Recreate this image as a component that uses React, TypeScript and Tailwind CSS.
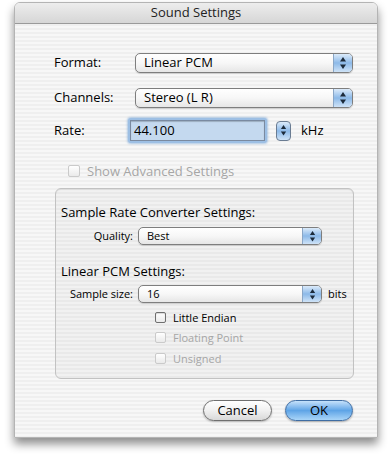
import React from "react";

const stripes =
  "bg-[image:repeating-linear-gradient(180deg,#efefef_0px,#efefef_2px,#f7f7f7_2px,#f7f7f7_4px)]";

function Arrows({ size = 4 }: { size?: number }) {
  return (
    <svg width={size * 2} height={size * 3 + 2} viewBox="0 0 8 14">
      <path d="M4 1 L7 5.5 L1 5.5 Z" fill="#1c2a3a" />
      <path d="M4 13 L7 8.5 L1 8.5 Z" fill="#1c2a3a" />
    </svg>
  );
}

function Popup({ text, className, small }: { text: string; className: string; small?: boolean }) {
  return (
    <div
      className={`shrink-0 flex items-stretch rounded-[5px] border border-[#7e7e7e] bg-gradient-to-b from-white via-[#f7f7f7] to-[#e6e6e6] shadow-[0_1px_1px_rgba(0,0,0,0.15)] overflow-hidden ${className}`}
    >
      <div className={`flex-1 flex items-center text-black ${small ? "pl-[8px] text-[11px]" : "pl-[8px] text-[13px]"}`}>
        {text}
      </div>
      <div className="w-[19px] flex items-center justify-center bg-gradient-to-b from-[#dcebfa] via-[#8cb9e8] to-[#cfe3f7] border-l border-[#8aa6c6]">
        <Arrows size={small ? 3.5 : 4} />
      </div>
    </div>
  );
}

function Checkbox({ label, disabled, small }: { label: string; disabled?: boolean; small?: boolean }) {
  return (
    <div className={`flex items-center ${small ? "h-[12px]" : "h-[14px]"}`}>
      <div
        className={`shrink-0 ${small ? "w-[11px] h-[11px]" : "w-[12px] h-[12px]"} rounded-[2px] border bg-gradient-to-b from-white to-[#eaeaea] ${
          disabled ? "border-[#cacaca]" : "border-[#6f6f6f] shadow-[inset_0_1px_1px_rgba(0,0,0,0.15)]"
        }`}
      />
      <span
        className={`ml-[7px] leading-none ${small ? "text-[11px]" : "text-[13px]"} ${disabled ? "text-[#a6a6a6]" : "text-black"}`}
      >
        {label}
      </span>
    </div>
  );
}

export default function App() {
  return (
    <div className="w-[392px] h-[462px] bg-white pt-[2px] pl-[14px] font-['Open_Sans',sans-serif] text-[13px] text-black overflow-hidden">
      <div className="w-[364px] h-[436px] rounded-t-[6px] border border-[#b4b4b4] shadow-[0_6px_10px_rgba(0,0,0,0.45)] flex flex-col overflow-hidden">
        {/* title bar */}
        <div className="shrink-0 h-[21px] bg-gradient-to-b from-[#ededed] to-[#d6d6d6] border-b border-[#9a9a9a] flex items-center justify-center text-[13px] text-[#222]">
          Sound Settings
        </div>

        <div className={`flex-1 ${stripes} flex flex-col`}>
          {/* Format */}
          <div className="flex items-center mt-[29px] h-[20px]">
            <div className="shrink-0 w-[120px] pl-[39px]">Format:</div>
            <Popup text="Linear PCM" className="w-[218px] h-[20px]" />
          </div>
          {/* Channels */}
          <div className="flex items-center mt-[15px] h-[20px]">
            <div className="shrink-0 w-[120px] pl-[39px]">Channels:</div>
            <Popup text="Stereo (L R)" className="w-[218px] h-[20px]" />
          </div>
          {/* Rate */}
          <div className="flex items-center mt-[10px] h-[25px]">
            <div className="shrink-0 w-[113px] pl-[39px]">Rate:</div>
            <div className="shrink-0 w-[139px] h-[25px] rounded-[3px] p-[2px] bg-[#9dbfe4] shadow-[0_0_2px_1px_rgba(120,165,215,0.55)]">
              <div className="w-full h-full bg-[#c4d9ef] border border-[#7a8aa0] shadow-[inset_0_1px_1px_rgba(0,0,0,0.2)] flex items-center pl-[3px] text-[13px]">
                44.100
              </div>
            </div>
            <div className="shrink-0 ml-[9px] w-[15px] h-[20px] rounded-[4px] border border-[#6a7c92] bg-gradient-to-b from-[#dcebfa] via-[#8cb9e8] to-[#cfe3f7] flex items-center justify-center">
              <Arrows size={3.5} />
            </div>
            <span className="ml-[10px] text-[13px]">kHz</span>
          </div>
          {/* Show advanced */}
          <div className="mt-[21px] pl-[53px]">
            <Checkbox label="Show Advanced Settings" disabled />
          </div>

          {/* Group box */}
          <div className="shrink-0 mt-[10px] ml-[40px] w-[299px] h-[191px] rounded-[6px] border border-[#c2c2c2] bg-[#000]/[0.025] shadow-[inset_0_1px_1px_rgba(0,0,0,0.06)] flex flex-col">
            <div className="mt-[15px] pl-[5px] text-[13px] leading-[16px]">Sample Rate Converter Settings:</div>
            <div className="flex items-center mt-[7px] h-[18px]">
              <div className="shrink-0 w-[82px] text-right pr-[5px] text-[11px]">Quality:</div>
              <Popup text="Best" small className="w-[184px] h-[18px]" />
            </div>
            <div className="mt-[18px] pl-[5px] text-[13px] leading-[16px]">Linear PCM Settings:</div>
            <div className="flex items-center mt-[6px] h-[18px]">
              <div className="shrink-0 w-[82px] text-right pr-[5px] text-[11px]">Sample size:</div>
              <Popup text="16" small className="w-[184px] h-[18px]" />
              <span className="ml-[6px] text-[11px]">bits</span>
            </div>
            <div className="ml-[99px] mt-[8px] flex flex-col gap-[8.5px]">
              <Checkbox label="Little Endian" small />
              <Checkbox label="Floating Point" small disabled />
              <Checkbox label="Unsigned" small disabled />
            </div>
          </div>

          {/* Buttons */}
          <div className="flex justify-end gap-[13px] mt-[21px] pr-[24px]">
            <button className="w-[69px] h-[21px] rounded-full border border-[#6f6f6f] bg-gradient-to-b from-white via-[#f0f0f0] to-[#d9d9d9] shadow-[0_1px_2px_rgba(0,0,0,0.25)] text-[13px] text-black leading-none">
              Cancel
            </button>
            <button className="w-[68px] h-[21px] rounded-full border border-[#3f6da3] bg-gradient-to-b from-[#c5e1fa] via-[#5ea4e6] to-[#a9d5f8] shadow-[0_1px_2px_rgba(0,0,0,0.3)] text-[13px] text-black leading-none">
              OK
            </button>
          </div>
        </div>
      </div>
    </div>
  );
}
